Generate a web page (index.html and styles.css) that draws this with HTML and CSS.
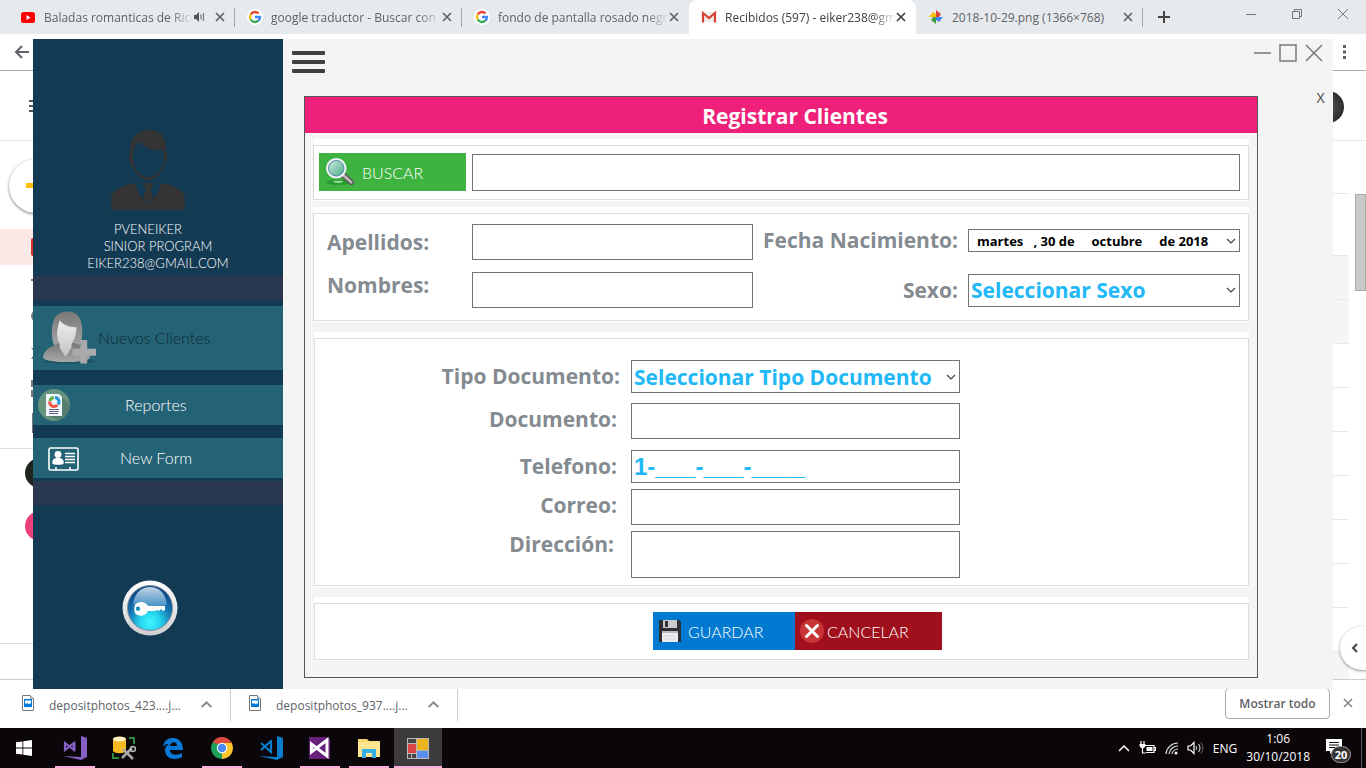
FILE: index.html
```html
<!DOCTYPE html>
<html lang="es">
<head>
<meta charset="utf-8">
<title>Registrar Clientes</title>
<link rel="stylesheet" href="styles.css">
</head>
<body>
<svg class="defs" aria-hidden="true">
  <defs>
    <symbol id="close" viewBox="0 0 10 10"><path d="M1 1l8 8M9 1L1 9" stroke="currentColor" stroke-width="1.700" fill="none"/></symbol>
    <symbol id="chev-down" viewBox="0 0 10 6"><path d="M1 1l4 4 4-4" stroke="#444" stroke-width="1.200" fill="none"/></symbol>
    <symbol id="chev-up" viewBox="0 0 10 6"><path d="M.7 5.300L5 1l4.300 4.300" stroke="currentColor" stroke-width="1.700" fill="none"/></symbol>
    <symbol id="google" viewBox="0 0 16 16">
      <circle cx="8" cy="8" r="8" fill="#fff"/>
      <g fill="none" stroke-width="2.400">
        <path d="M3.700 5.500A5 5 0 0 1 11.600 4.500" stroke="#ea4335"/>
        <path d="M3.700 5.500A5 5 0 0 0 3.700 10.500" stroke="#fbbc05"/>
        <path d="M3.700 10.500A5 5 0 0 0 11.300 11.700" stroke="#34a853"/>
        <path d="M11.300 11.700A5 5 0 0 0 13 8H8" stroke="#4285f4"/>
      </g>
    </symbol>
    <symbol id="jpg" viewBox="0 0 12 16">
      <path d="M.5.5h8l3 3v12H.5z" fill="#fff" stroke="#777"/><path d="M8.500.5v3h3" fill="#ddd" stroke="#999"/>
      <path d="M2 4h8v8H2z" fill="#0078d7"/><path d="M3 5.500h6v3.500L8 8 7 9.500 5.500 8 4 9 3 8z" fill="#fff"/>
    </symbol>
    <linearGradient id="grey" x2="0" y2="1"><stop stop-color="#777"/><stop offset="1" stop-color="#a9a9a9"/></linearGradient>
    <linearGradient id="face" x2="0" y2="1"><stop stop-color="#eee"/><stop offset="1" stop-color="#c4c4c4"/></linearGradient>
    <linearGradient id="ring" x2="0" y2="1"><stop stop-color="#fff"/><stop offset="1" stop-color="#cfcfcf"/></linearGradient>
    <radialGradient id="orb" cx=".5" cy=".82" r=".75"><stop stop-color="#3ff6ff"/><stop offset=".3" stop-color="#27d4ee"/><stop offset=".65" stop-color="#1475b0"/><stop offset="1" stop-color="#0b4684"/></radialGradient>
    <linearGradient id="shine" x2="0" y2="1"><stop stop-color="#e4eef6"/><stop offset="1" stop-color="#3f8dc2"/></linearGradient>
    <linearGradient id="lens" x2="1" y2="1"><stop stop-color="#d9f1ec"/><stop offset="1" stop-color="#3fa57f"/></linearGradient>
  </defs>
</svg>

<div class="browser">
  <header class="tabs">
    <div class="tab">
      <svg class="fav" viewBox="0 0 16 16"><rect x="1" y="3" width="14" height="11" rx="2.500" fill="#f00"/><path d="M6.500 6v5l4-2.500z" fill="#fff"/></svg>
      <span class="tab-title">Baladas romanticas de Rica</span>
      <svg class="speaker" viewBox="0 0 11 10"><path d="M0 3h2l3-3v10L2 7H0z" fill="#555"/><path d="M7 2.500v5M9.500 1v8" stroke="#777" stroke-width="1.200"/></svg>
      <button class="x" aria-label="Cerrar pestaña"><svg><use href="#close"/></svg></button>
    </div>
    <div class="tab"><svg class="fav"><use href="#google"/></svg><span class="tab-title">google traductor - Buscar con</span><button class="x" aria-label="Cerrar pestaña"><svg><use href="#close"/></svg></button></div>
    <div class="tab tab-plain"><svg class="fav"><use href="#google"/></svg><span class="tab-title">fondo de pantalla rosado negr</span><button class="x" aria-label="Cerrar pestaña"><svg><use href="#close"/></svg></button></div>
    <div class="tab tab-active">
      <svg class="fav" viewBox="0 0 16 16"><path d="M2 3h12v10H2z" fill="#eee"/><path d="M2 13.500V4l6 5 6-5v9.500" fill="none" stroke="#d93f33" stroke-width="2.200"/></svg>
      <span class="tab-title">Recibidos (597) - eiker238@gm</span><button class="x" aria-label="Cerrar pestaña"><svg><use href="#close"/></svg></button>
    </div>
    <div class="tab">
      <svg class="fav" viewBox="0 0 16 16"><path d="M8 8V1l5 4-2 3z" fill="#db4437"/><path d="M8 8h7l-4 5-3-2z" fill="#4285f4"/><path d="M8 8v7l-5-4 2-3z" fill="#43a047"/><path d="M8 8H1l4-5 3 2z" fill="#fbbc05"/></svg>
      <span class="tab-title">2018-10-29.png (1366×768)</span><button class="x" aria-label="Cerrar pestaña"><svg><use href="#close"/></svg></button>
    </div>
    <button class="new-tab" aria-label="Nueva pestaña"><svg viewBox="0 0 14 14"><path d="M7 1v12M1 7h12" stroke="#444" stroke-width="2"/></svg></button>
    <div class="os-controls">
      <button aria-label="Minimizar"><svg viewBox="0 0 12 12"><path d="M1 6.500h10" stroke="#777"/></svg></button>
      <button aria-label="Restaurar"><svg viewBox="0 0 12 12"><path d="M1.500 3.500h7v7h-7zM3.500 3.500v-2h7v7h-2" fill="none" stroke="#777"/></svg></button>
      <button aria-label="Cerrar"><svg viewBox="0 0 12 12"><path d="M1 1l10 10M11 1L1 11" stroke="#777"/></svg></button>
    </div>
  </header>
  <div class="toolbar">
    <button aria-label="Atrás"><svg viewBox="0 0 16 14"><path d="M15 7H2M8 1L2 7l6 6" fill="none" stroke="#5f6368" stroke-width="2"/></svg></button>
    <button aria-label="Menú"><svg viewBox="0 0 16 14"><path d="M6 0h3v3H6zM6 5.500h3v3H6zM6 11h3v3H6z" fill="#5f6368"/></svg></button>
  </div>
  <div class="mail">
    <div class="mail-left">
      <div class="mail-head"><svg viewBox="0 0 6 14"><path d="M1 2h5M1 7h5M1 12h5" stroke="#555" stroke-width="2"/></svg></div>
      <div class="compose"><div class="compose-circle"><i></i></div></div>
      <div class="inbox"><i></i></div>
      <svg class="marks" viewBox="0 0 33 183"><g fill="#777"><path d="M31 14h2v2h-2zM31 83l2 2v-2zM31 94l2-3v3zM31 115h2v7h-2zM31 125h2v7h-2z"/><path d="M32 148h1v20h-1z"/><circle cx="37" cy="51" r="6"/></g></svg>
      <div class="chats"><i class="face"></i><i class="face face-pink"></i></div>
      <div class="mail-foot"></div>
    </div>
    <div class="mail-right">
      <div class="mail-head"><i class="user"></i></div>
      <div class="list">
        <i class="row row-first"></i><i class="row row-tall"></i><i class="row row-read"></i><i class="row row-read"></i><i class="row"></i><i class="row"></i><i class="row"></i><i class="row"></i><i class="row"></i><i class="row"></i><i class="row"></i><i class="row row-read row-last"></i>
      </div>
      <i class="thumb"></i>
      <button class="side-toggle" aria-label="Mostrar panel"><svg viewBox="0 0 7 10"><path d="M6 1L2 5l4 4" fill="none" stroke="#444" stroke-width="2"/></svg></button>
    </div>
  </div>
  <footer class="downloads">
    <div class="download"><svg class="file"><use href="#jpg"/></svg><span>depositphotos_423....j...</span><button aria-label="Opciones"><svg><use href="#chev-up"/></svg></button></div>
    <div class="download"><svg class="file"><use href="#jpg"/></svg><span>depositphotos_937....j...</span><button aria-label="Opciones"><svg><use href="#chev-up"/></svg></button></div>
    <button class="show-all">Mostrar todo</button>
    <button class="x x-big" aria-label="Cerrar descargas"><svg><use href="#close"/></svg></button>
  </footer>
</div>

<div class="app">
  <aside class="sidebar">
    <div class="profile">
      <svg class="avatar" viewBox="0 0 74 80">
        <path fill="#343434" fill-rule="evenodd" d="M19 26C18 9 26 0 38 0c12 0 18 7 17 22 2 3 2 8-1 11-2 9-9 17-17 17s-15-8-17-17c-3-3-3-5-1-7zM28 12c-6 4-6 8-6 17 1 11 7 18 15 18s15-7 16-18l-1-9c-11 1-18-2-24-8z"/>
        <path fill="#343434" d="M0 80V69c1-9 9-13 25-16 0 9 6 16 12 21 6-5 12-12 13-21 15 3 23 7 24 16v11z"/>
        <path fill="#343434" d="M32 53h10l-2 6 2 9-5 5-5-5 3-9z"/>
      </svg>
      <p>PVENEIKER</p><p class="indent">SINIOR PROGRAM</p><p class="indent">EIKER238@GMAIL.COM</p>
    </div>
    <nav class="menu">
      <button class="item item-current">
        <svg class="person" viewBox="0 0 56 56">
          <ellipse cx="27" cy="52" rx="27" ry="2" fill="#1d5262"/>
          <path d="M9 22C9 7 15 1 25 1s15 7 15 20c0 11-3 17-9 19H17C11 38 9 32 9 22z" fill="url(#grey)"/>
          <path d="M0 48c1-9 8-11 16-15h16c9 4 15 6 16 15-4 6-44 6-48 0z" fill="url(#grey)"/>
          <path d="M17 10c4 5 9 7 17 7 0 9-3 14-5 17v4l-6 9-6-9v-4c-3-5-4-12 0-24z" fill="url(#face)"/>
          <path d="M38 30h7v9h9v7h-9v8h-7v-8h-8v-7h8z" fill="#aaa"/>
        </svg>
        <span>Nuevos Clientes</span>
      </button>
      <button class="item item-report">
        <svg class="report" viewBox="0 0 32 32">
          <circle cx="16" cy="16" r="16" fill="#66927e"/><path d="M24 8l8 8a16 16 0 0 1-11 15L9 26z" fill="#547d70"/>
          <path d="M8 5h13l3 3v19H8z" fill="#f2f4fb"/>
          <g fill="none" stroke-width="3"><path d="M12 12a4.300 4.300 0 0 1 4-3.500" stroke="#60b244"/><path d="M17 8.500a4.300 4.300 0 0 1 3 7" stroke="#2198d8"/><path d="M11.800 12.500a4.300 4.300 0 0 0 7.500 3.500" stroke="#ef5643"/></g>
          <path d="M11 20.500h10M11 22.500h10M11 24.500h9" stroke="#65698f"/>
        </svg>
        <span>Reportes</span>
      </button>
      <button class="item item-form">
        <svg class="card" viewBox="0 0 32 24">
          <rect x="1" y="1" width="29" height="22" rx="1.500" fill="none" stroke="#fff" stroke-width="1.600"/>
          <circle cx="10" cy="7.500" r="3.400" fill="#fff"/><path d="M4.500 17c-1-5 2-6 5.500-6s6.500 1 5.500 6c-1 1-10 1-11 0z" fill="#fff"/>
          <path d="M17 6.500h10M17 9.500h10M17 12.500h10M17 15.500h10" stroke="#fff" stroke-width="1.300"/><path d="M8 20v3M22 20v3" stroke="#fff" stroke-width="1.500"/>
        </svg>
        <span>New Form</span>
      </button>
    </nav>
    <button class="key" aria-label="Acceso">
      <svg viewBox="0 0 56 56">
        <circle cx="28" cy="28" r="27.500" fill="url(#ring)"/><circle cx="28" cy="28" r="22.500" fill="url(#orb)" stroke="#82909d"/>
        <path d="M11 24C13 12 20 7 28 7s15 5 17 17c-8 5-26 5-34 0z" fill="url(#shine)" opacity=".85"/>
        <path fill="#fff" fill-rule="evenodd" d="M13 25c3-4 10-4 13 1h17v4l-2 1-2-2-2 2-2-1-2 1h-7c-3 6-10 6-13 2-1-2-1-6 0-8zm3 1.500a2.200 2.200 0 1 0 .1 4.400 2.200 2.200 0 0 0-.1-4.400z"/>
      </svg>
    </button>
  </aside>

  <main class="content">
    <header class="app-bar">
      <button class="burger" aria-label="Menú"><i></i><i></i><i></i></button>
      <div class="app-controls">
        <button aria-label="Minimizar"><svg viewBox="0 0 20 20"><path d="M2 10h17" stroke="#777" stroke-width="1.500"/></svg></button>
        <button aria-label="Maximizar"><svg viewBox="0 0 20 20"><path d="M2 2h16v16H2z" fill="none" stroke="#777" stroke-width="1.500"/></svg></button>
        <button aria-label="Cerrar"><svg viewBox="0 0 20 20"><path d="M2 2l16 16M18 2L2 18" stroke="#777" stroke-width="1.500"/></svg></button>
      </div>
    </header>
    <div class="stage">
      <form class="panel">
        <h1>Registrar Clientes</h1>
        <section class="group">
          <div class="box search">
            <button type="button" class="btn btn-green">
              <svg class="lens" viewBox="0 0 32 30"><ellipse cx="14" cy="26" rx="13" ry="3" fill="#259a32"/><ellipse cx="14" cy="25.500" rx="5" ry="1" fill="#9de29b"/><path d="M18 17l10 9" stroke="#555" stroke-width="6" stroke-linecap="round"/><path d="M18 17l10 9" stroke="#b9b9b9" stroke-width="3" stroke-linecap="round"/><circle cx="12" cy="11" r="9.500" fill="url(#lens)" stroke="#f3f3fa" stroke-width="3"/><circle cx="12" cy="11" r="8.300" fill="none" stroke="#397b91"/></svg>
              <span>BUSCAR</span>
            </button>
            <input class="field" type="text" aria-label="Buscar">
          </div>
        </section>
        <section class="group">
          <div class="box person-grid">
            <label class="lab" for="apellidos">Apellidos:</label>
            <input class="field" id="apellidos" type="text">
            <label class="lab lab-right lab-top" for="fecha">Fecha Nacimiento:</label>
            <div class="drop drop-date"><input class="field date" id="fecha" type="text" value="martes   , 30 de     octubre     de 2018"><svg><use href="#chev-down"/></svg></div>
            <label class="lab lab-up" for="nombres">Nombres:</label>
            <input class="field" id="nombres" type="text">
            <label class="lab lab-right" for="sexo">Sexo:</label>
            <div class="drop"><select class="field choice" id="sexo"><option>Seleccionar Sexo</option></select><svg><use href="#chev-down"/></svg></div>
          </div>
        </section>
        <section class="group group-doc">
          <div class="box doc">
            <div class="line"><label class="lab lab-wide" for="tipo">Tipo Documento:</label><div class="drop"><select class="field choice" id="tipo"><option>Seleccionar Tipo Documento</option></select><svg><use href="#chev-down"/></svg></div></div>
            <div class="line line-spaced"><label class="lab" for="documento">Documento:</label><input class="field" id="documento" type="text"></div>
            <div class="line"><label class="lab" for="telefono">Telefono:</label><input class="field phone" id="telefono" type="text" value="1-___-___-____"></div>
            <div class="line"><label class="lab" for="correo">Correo:</label><input class="field" id="correo" type="text"></div>
            <div class="line"><label class="lab lab-short" for="direccion">Dirección:</label><textarea class="field" id="direccion"></textarea></div>
          </div>
        </section>
        <section class="group group-doc">
          <div class="box actions">
            <button type="button" class="btn btn-blue">
              <svg class="disk" viewBox="0 0 24 24"><path d="M1 1h20l2 2v20H1z" fill="#2e2e36"/><path d="M5 1h14v8H5z" fill="#c9c9c9"/><path d="M7 2h3v6H7z" fill="#333"/><path d="M4 12h16v11H4z" fill="#ececf2"/><path d="M4 12h16v2H4z" fill="#bbb"/><path d="M6 17h12M6 20h12" stroke="#d3d3dd"/></svg>
              <span>GUARDAR</span>
            </button>
            <button type="button" class="btn btn-red">
              <svg class="disk" viewBox="0 0 24 24"><circle cx="12" cy="12" r="12" fill="#c93535"/><path d="M6.500 6.500l11 11M17.500 6.500l-11 11" stroke="#fff" stroke-width="3" stroke-linecap="round"/></svg>
              <span>CANCELAR</span>
            </button>
          </div>
        </section>
      </form>
      <button class="panel-close">X</button>
    </div>
  </main>
</div>

<footer class="taskbar">
  <button class="task start" aria-label="Inicio"><svg viewBox="0 0 16 16"><path d="M0 2.300l6.500-.9v6.200H0zM7.300 1.300L16 0v7.600H7.300zM0 8.400h6.500v6.200L0 13.700zM7.300 8.400H16V16l-8.700-1.200z" fill="#fff"/></svg></button>
  <button class="task open" aria-label="Visual Studio"><svg viewBox="0 0 24 24"><path d="M18 0l6 2v19l-6 3-18-4 18 1z" fill="#865fc5"/><path d="M2 7v7l9-7v7z" fill="none" stroke="#865fc5" stroke-width="2.200"/><path d="M11 7v7" stroke="#865fc5" stroke-width="3"/></svg></button>
  <button class="task" aria-label="SQL Server"><svg viewBox="0 0 24 24"><path d="M1 3v12c2 3 11 3 13 0V3z" fill="#f5b921"/><ellipse cx="7.500" cy="3" rx="6.500" ry="2.500" fill="#fff0bc"/><path d="M17 2h5v6M1 17v5h6" fill="none" stroke="#2e8b3d" stroke-width="2"/><path d="M10 22l10-10M11 13l10 10" stroke="#aaa" stroke-width="2.500"/><circle cx="21" cy="13" r="2.500" fill="none" stroke="#bbb" stroke-width="1.500"/></svg></button>
  <button class="task" aria-label="Edge"><svg viewBox="0 0 24 24"><path fill="#0a78d7" d="M2 11C3 4 7 2 12 2c7 0 10 5 10 12H9c0 5 7 6 12 3v4c-7 4-17 2-17-7 0-3 2-5 4-6-3 0-5 1-6 3zm7-1h7c0-5-6-5-7 0z"/></svg></button>
  <button class="task open" aria-label="Chrome"><svg viewBox="0 0 24 24"><path d="M12 12L2.500 6.500A11 11 0 0 1 21.500 6.500z" fill="#dd4b3e"/><path d="M12 12l9.500-5.500A11 11 0 0 1 12 23z" fill="#fdc72e"/><path d="M12 12v11A11 11 0 0 1 2.500 6.500z" fill="#1fa15d"/><path d="M12 7h9.700L17 15z" fill="#fdc72e"/><path d="M2.500 6.500L7.500 15 12 9z" fill="#1fa15d"/><path d="M3 6h18l.7 1H12z" fill="#dd4b3e"/><circle cx="12" cy="12" r="5.200" fill="#fff"/><circle cx="12" cy="12" r="4.200" fill="#4a8af4"/></svg></button>
  <button class="task" aria-label="Visual Studio Code"><svg viewBox="0 0 24 24"><path d="M18 0l6 2v19l-6 3-18-4 18 1z" fill="#0b7dcd"/><path d="M12 4v12L2 7M12 5L2 14" fill="none" stroke="#0b7dcd" stroke-width="2.200"/></svg></button>
  <button class="task open" aria-label="Visual Studio 2017"><svg viewBox="0 0 24 24"><path d="M1 1h19l2 3v19H1z" fill="#68217a"/><path d="M3.500 8v8L19 4v16L3.500 8z" fill="none" stroke="#fff" stroke-width="3"/></svg></button>
  <button class="task open" aria-label="Explorador"><svg viewBox="0 0 24 24"><path d="M1 3h9l2 2h11v16H1z" fill="#f7d56c"/><path d="M1 6h22v15H1z" fill="#ffe791"/><path d="M5 22v-9h14v9h-4v-5H9v5z" fill="#35b0e6"/></svg></button>
  <button class="task open task-active" aria-label="Registrar Clientes"><svg viewBox="0 0 24 24"><path d="M1 2h22v21H1z" fill="#bbb"/><path d="M2 3h8v4H2zM2 18h3v4H2zM6 18h4v4H6z" fill="#444"/><path d="M2 8h8v9H2z" fill="#da4546"/><path d="M11 3h11v11H11z" fill="#edb31b"/><path d="M11 15h11v7H11z" fill="#5c8ef0"/></svg></button>
  <div class="tray">
    <svg class="t-chev" viewBox="0 0 12 8"><path d="M1 7l5-5 5 5" fill="none" stroke="#fff" stroke-width="1.500"/></svg>
    <svg class="t-icon" viewBox="0 0 16 14"><path d="M4.500 4.500h10v7h-8M14.500 6.500h1.500v3h-1.500M3 7v5h3M1.500 0v3M4.500 0v3" fill="none" stroke="#fff" stroke-width="1.200"/><path d="M7 6h6v4H7zM0 3h6v2L4.500 7h-3L0 5z" fill="#fff"/></svg>
    <svg class="t-wifi" viewBox="0 0 13 14"><g fill="none" stroke="#ddd" stroke-width="1.200"><path d="M1 13A12 12 0 0 1 13 2M4 13a9 9 0 0 1 9-8M7 13a6 6 0 0 1 6-5"/></g><circle cx="11" cy="12" r="1.500" fill="#fff"/></svg>
    <svg class="t-icon" viewBox="0 0 17 14"><path d="M1 5h2.500L7 1.500v11L3.500 9H1z" fill="none" stroke="#fff" stroke-width="1.200"/><path d="M9 5q1.500 2 0 4M11.500 3q3 4 0 8" fill="none" stroke="#ccc" stroke-width="1.200"/><path d="M14 1.500q4 5.500 0 11" fill="none" stroke="#666"/></svg>
    <span>ENG</span>
    <div class="clock"><time>1:06</time><time>30/10/2018</time></div>
    <div class="notice"><svg viewBox="0 0 16 15"><path d="M0 0h16v12H7l-3 3v-3H0z" fill="#fff"/><path d="M3 3.500h10M3 6h10M3 8.500h7" stroke="#111"/></svg><b>20</b></div>
  </div>
</footer>
</body>
</html>
```
FILE: styles.css
```css
* { box-sizing: border-box; }
body {
  margin: 0;
  min-height: 100vh;
  display: flex;
  flex-direction: column;
  position: relative;
  font-family: "Open Sans", "Noto Sans", sans-serif;
  font-size: 12px;
  color: #5f6368;
  background: #fff;
}
button, input, select, textarea { font: inherit; color: inherit; margin: 0; border: 0; border-radius: 0; background: none; padding: 0; }
p, h1 { margin: 0; }
i { display: block; }
svg { display: block; flex: none; }
.defs { position: absolute; width: 0; height: 0; }

/* Browser window in the background */
.browser { flex: 1; display: flex; flex-direction: column; }
.tabs { display: flex; height: 34px; padding-left: 8px; background: #e6eaed; }
.tab { flex: 0 1 227px; min-width: 0; display: flex; align-items: center; padding: 0 10px 0 12px; position: relative; }
.tab::after { content: ""; position: absolute; right: 0; top: 8px; width: 1px; height: 19px; background: #a3a7aa; }
.tab-plain::after, .tab-active::after { display: none; }
.tab-active { background: #fff; border-radius: 8px 8px 0 0; color: #3c4043; }
.fav { width: 16px; height: 16px; margin-right: 8px; }
.tab-title { flex: 1; white-space: nowrap; overflow: hidden; mask-image: linear-gradient(to left, transparent, #000 24px); }
.tab:nth-child(5) .tab-title { mask-image: none; }
.speaker { width: 11px; height: 10px; margin-right: 10px; }
.x svg { width: 10px; height: 10px; }
.new-tab { padding: 0 14px; }
.new-tab svg { width: 14px; height: 14px; }
.os-controls { display: flex; gap: 34px; margin-left: auto; padding: 8px 17px 0 0; align-items: flex-start; }
.os-controls svg { width: 12px; height: 12px; }
.toolbar { display: flex; justify-content: space-between; align-items: center; height: 37px; padding: 0 13px 0 14px; border-bottom: 1px solid #aaa; }
.toolbar svg { width: 16px; height: 14px; }

.mail { flex: 1; display: flex; justify-content: space-between; }
.mail-left { width: 33px; overflow: hidden; display: flex; flex-direction: column; }
.mail-right { width: 33px; overflow: hidden; position: relative; border-bottom: 1px solid #ccc; }
.mail-head { height: 70px; border-bottom: 1px solid #e8e8e8; padding-top: 28px; }
.mail-head svg { width: 6px; height: 14px; margin-left: 28px; }
.mail-head .user { width: 32px; height: 32px; margin: -8px 0 0 -21px; border-radius: 50%; background: radial-gradient(#555, #1b1e1b); }
.compose { height: 88px; padding: 18px 0 0 9px; }
.compose-circle { width: 54px; height: 54px; border-radius: 50%; box-shadow: 0 1px 3px #777; padding: 24px 0 0 17px; }
.compose-circle i { width: 20px; height: 5px; background: #fbbc05; }
.inbox { height: 36px; background: #fce8e6; padding: 9px 0 0 31px; }
.inbox i { height: 18px; background: #d93025; border-radius: 2px 0 0 2px; }
.marks { width: 33px; height: 183px; }
.chats { flex: 1; border-top: 1px solid #ddd; padding: 9px 0 0 25px; }
.face { width: 30px; height: 30px; border-radius: 50%; background: #20251c; margin-bottom: 23px; }
.face-pink { background: #ec407a; }
.mail-foot { height: 37px; border-top: 1px solid #ddd; border-bottom: 1px solid #ccc; }
.list { width: 16px; }
.row { height: 44px; border-bottom: 1px solid #e8eaea; }
.row-first { height: 53px; }
.row-tall { height: 62px; }
.row-read { background: #f4f6f6; }
.row-last { height: 27px; border: 0; }
.thumb { position: absolute; right: 0; top: 123px; width: 11px; height: 97px; background: #c9c9c9; border: 1px solid #aaa; }
.side-toggle { position: absolute; right: -18px; bottom: 9px; width: 44px; height: 44px; border-radius: 50%; background: #fff; box-shadow: 0 1px 3px #888; padding-left: 11px; }
.side-toggle svg { width: 7px; height: 10px; }

.downloads { display: flex; height: 48px; padding-top: 8px; margin-bottom: 40px; }
.download { display: flex; align-items: center; width: 227px; height: 33px; padding: 0 18px 0 18px; border-right: 1px solid #ccc; }
.download:first-child { width: 231px; padding-left: 22px; }
.file { width: 12px; height: 16px; margin-bottom: 4px; }
.download span { flex: 1; padding: 2px 0 0 15px; }
.download button { color: #888; }
.download button svg { width: 11px; height: 7px; }
.show-all { width: 105px; height: 31px; margin-left: auto; border: 1px solid #aaa; border-radius: 4px; font-weight: 600; }
.x-big { width: 36px; padding: 0 0 10px 13px; color: #888; }

/* Desktop application window */
.app { position: absolute; left: 33px; right: 33px; top: 39px; bottom: 79px; display: flex; background: #f4f4f4; }
.sidebar { width: 250px; background: #133a53; color: #fff; font-family: Lato, sans-serif; font-weight: 300; display: flex; flex-direction: column; align-items: stretch; }
.profile { height: 237px; padding: 91px 20px 0 0; font-size: 13px; line-height: 17px; text-align: center; }
.avatar { width: 74px; height: 80px; margin: 0 auto 11px; }
.profile .indent { padding-left: 20px; }
.menu { border-top: 24px solid #29384f; border-bottom: 24px solid #29384f; padding: 6px 0 3px; display: flex; flex-direction: column; }
.item { display: flex; align-items: center; height: 40px; padding-bottom: 1px; background: #246375; font-size: 16px; }
.item-current { height: 64px; margin-bottom: 15px; padding-left: 10px; color: #0d2834; }
.item-report { margin-bottom: 13px; padding-left: 5px; }
.item-form { padding-left: 15px; }
.person { width: 55px; height: 56px; }
.report { width: 32px; height: 32px; margin-right: 55px; }
.card { width: 32px; height: 24px; margin: 3px 40px 0 0; }
.key { margin: 75px auto 0; padding-right: 16px; }
.key svg { width: 56px; height: 56px; }

.content { flex: 1; min-width: 0; display: flex; flex-direction: column; }
.app-bar { display: flex; justify-content: space-between; align-items: flex-start; height: 57px; padding: 4px 9px 0 9px; }
.burger { width: 33px; display: grid; gap: 5px; padding-top: 8px; }
.burger i { height: 4px; border-radius: 1px; background: #404040; }
.app-controls { display: flex; gap: 6px; }
.app-controls svg { width: 20px; height: 20px; }
.stage { flex: 1; display: flex; align-items: flex-start; padding: 0 0 11px 21px; }
.panel { flex: 1; align-self: stretch; border: 1px solid #555; background: #f4f4f4; }
.panel-close { width: 75px; padding-left: 50px; margin-top: -7px; font-size: 14px; line-height: 18px; color: #444; }
.panel h1 { height: 36px; margin-bottom: 6px; padding-left: 28px; background: #ee207a; color: #fff; font-size: 21px; line-height: 38px; text-align: center; }
.group { margin: 0 8px 6px; padding: 6px 0 1px; background: #fff; }
.group-doc { margin-top: 10px; margin-left: 9px; }
.box { border: 1px solid #dcdcdc; }
.search { display: flex; gap: 6px; padding: 7px 8px 8px 5px; }
.btn { display: flex; align-items: center; gap: 7px; width: 147px; height: 38px; padding-left: 6px; color: #fff; font-family: Lato, sans-serif; font-size: 16px; font-weight: 300; }
.btn-green { background: #3eb340; }
.btn-blue { background: #007ad0; width: 142px; gap: 6px; padding-left: 5px; }
.btn-red { background: #a0101c; gap: 3px; padding-left: 5px; }
.lens { width: 30px; height: 28px; }
.disk { width: 24px; height: 24px; }
.field { display: block; width: 100%; min-width: 0; height: 36px; padding: 0 2px; border: 1px solid #737373; background: #fff; color: #20b8f6; font-size: 21px; font-weight: 700; outline: 0; resize: none; }
.search .field { flex: 1; height: 37px; margin-top: 1px; }
.lab { color: #848b91; font-size: 21px; font-weight: 700; line-height: 33px; white-space: nowrap; }
.person-grid { display: grid; grid-template-columns: 145px 281px 1fr 272px; row-gap: 12px; align-items: center; padding: 10px 8px 12px 13px; }
.person-grid .lab-right { text-align: right; padding-right: 10px; }
.lab-top { align-self: start; }
.lab-up { align-self: start; line-height: 26px; }
.drop { position: relative; width: 100%; }
.drop svg { position: absolute; right: 4px; top: calc(50% - 3px); width: 10px; height: 6px; pointer-events: none; }
.drop-date { margin-bottom: 3px; }
.choice { height: 33px; appearance: none; }
.date { height: 23px; padding-left: 8px; font-size: 13px; color: #000; white-space: pre; }
.doc { display: grid; gap: 6px; padding: 21px 0 7px; }
.line { display: grid; grid-template-columns: 316px 329px; align-items: start; }
.line-spaced { padding: 4px 0 5px; }
.line .lab { text-align: right; padding-right: 14px; }
.line .lab-wide { padding-right: 11px; }
.line .lab-short { padding-right: 17px; line-height: 26px; }
.phone { height: 33px; font-family: "Liberation Sans", sans-serif; font-size: 24px; }
textarea.field { height: 47px; }
.actions { display: flex; justify-content: center; padding: 8px 0 9px 32px; }

/* Taskbar */
.taskbar { position: absolute; left: 0; right: 0; bottom: 0; display: flex; height: 40px; background: #0a0609; color: #fff; }
.task { width: 48px; height: 40px; margin-right: 1px; display: grid; place-items: center; position: relative; }
.task svg { width: 24px; height: 24px; }
.start { margin-right: 3px; }
.start svg { width: 16px; height: 16px; }
.open::after { content: ""; position: absolute; left: 4px; right: 4px; bottom: 0; height: 2px; background: #ffaedb; }
.task-active { background: #3d3b3e; }
.task-active::after { left: 0; right: 0; }
.tray { margin: 0 4px 0 auto; display: flex; align-items: center; gap: 9px; padding-right: 10px; border-right: 1px solid #555; }
.t-chev { width: 12px; height: 8px; }
.t-icon { width: 17px; height: 14px; }
.t-wifi { width: 13px; height: 14px; }
.clock { display: grid; text-align: center; line-height: 18px; }
.notice { position: relative; width: 25px; height: 30px; padding-top: 6px; margin-left: 7px; }
.notice svg { width: 16px; height: 15px; }
.notice b { position: absolute; right: 0; bottom: 0; width: 20px; height: 17px; border: 1px solid #999; border-radius: 9px; background: #333; font-size: 11px; line-height: 15px; text-align: center; }
```
